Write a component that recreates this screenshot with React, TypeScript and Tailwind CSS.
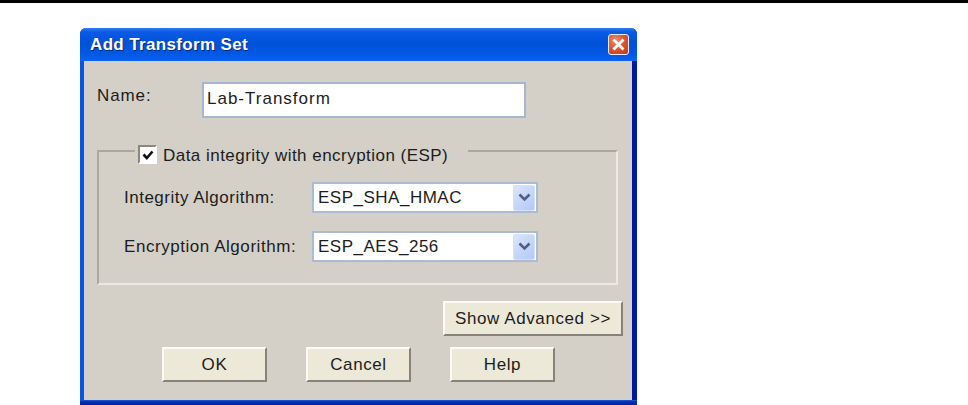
const font = "font-['Liberation_Sans',Arial,sans-serif]";

function CloseButton() {
  return (
    <button
      type="button"
      aria-label="Close"
      className="flex h-[21px] w-[21px] items-center justify-center rounded-[3px] border border-[#e8ecf8] bg-[radial-gradient(circle_at_35%_30%,#ec8a6a,#d9502a_55%,#bf3a14)]"
    >
      <svg width="13" height="13" viewBox="0 0 13 13">
        <path d="M2.5 2.5 L10.5 10.5 M10.5 2.5 L2.5 10.5" stroke="#ffffff" strokeWidth="2.8" strokeLinecap="square" />
      </svg>
    </button>
  );
}

function ComboBox({ value }: { value: string }) {
  return (
    <div className="flex h-[31px] w-[226px] items-center justify-between border-2 border-[#a9bcd3] bg-white pl-[4px] pr-[1px]">
      <span className="text-[17px] leading-none tracking-[0.5px] text-[#1c1c1c]">{value}</span>
      <span className="flex h-[26px] w-[22px] items-center justify-center rounded-[2px] border border-[#d5e0f8] bg-[linear-gradient(135deg,#dbe5fb,#b4c8f5)]">
        <svg width="13" height="9" viewBox="0 0 13 9">
          <path d="M1.5 1.5 L6.5 6.5 L11.5 1.5" fill="none" stroke="#4d6185" strokeWidth="2.6" />
        </svg>
      </span>
    </div>
  );
}

function DialogButton({ label, className }: { label: string; className: string }) {
  return (
    <button
      type="button"
      className={`h-[35px] border-t-2 border-l-2 border-r-2 border-b-2 border-t-[#fbfaf5] border-l-[#fbfaf5] border-r-[#85827a] border-b-[#85827a] bg-[#ece9d8] text-[17px] leading-none tracking-[0.6px] text-[#1c1c1c] ${className}`}
    >
      {label}
    </button>
  );
}

export default function App() {
  return (
    <div className={`h-[405px] w-[968px] overflow-hidden bg-white ${font}`}>
      <div className="h-[3px] bg-black" />

      <div className="ml-[80px] mt-[25px] flex h-[377px] w-[557px] flex-col rounded-t-[6px] bg-[#0a3fd0]">
        <div className="flex h-[33px] shrink-0 items-center justify-between rounded-t-[6px] bg-[linear-gradient(180deg,#2e7cf2_0%,#0a5ae6_12%,#0052d8_45%,#0058e4_80%,#0a62ee_100%)] pl-[10px] pr-[8px]">
          <span className="text-[17px] font-bold leading-none tracking-[0.35px] text-white [text-shadow:1px_1px_0_#0a2a80]">
            Add Transform Set
          </span>
          <CloseButton />
        </div>

        <div className="flex min-h-0 flex-1 border-l-[4px] border-r-[5px] border-l-[#0a54e4] border-r-[#00189c] bg-[#d4d0c8]">
          <div className="w-full pl-[13px] pt-[21px]">
            <div className="flex h-[36px] items-center">
              <label className="mb-[10px] w-[105px] text-[17px] leading-none tracking-[0.9px] text-[#1c1c1c]">Name:</label>
              <div className="flex h-[36px] w-[324px] items-center border-2 border-[#a3b8d0] bg-white pb-[3px] pl-[3px]">
                <span className="text-[17px] leading-none tracking-[1px] text-[#1c1c1c]">Lab-Transform</span>
              </div>
            </div>

            <fieldset className="mt-[20px] h-[147px] w-[521px] border-t-2 border-l-2 border-r-2 border-b-2 border-t-[#aaa79f] border-l-[#aaa79f] border-r-[#ebe9e3] border-b-[#ebe9e3] pl-[25px]">
              <legend className="ml-[11px] flex h-[26px] items-end bg-[#d4d0c8] pl-[3px] pr-[20px]">
                <span className="flex h-[19px] w-[19px] items-center justify-center border-2 border-t-[#8a877e] border-l-[#8a877e] border-r-white border-b-white bg-white">
                  <svg width="12" height="12" viewBox="0 0 12 12">
                    <path d="M1.5 5.5 L4.8 9 L10.5 2.5" fill="none" stroke="#111111" strokeWidth="2.6" />
                  </svg>
                </span>
                <span className="ml-[6px] text-[17px] leading-none tracking-[0.47px] text-[#1c1c1c]">
                  Data integrity with encryption (ESP)
                </span>
              </legend>

              <div className="mt-[18px] flex h-[31px] items-center">
                <span className="w-[188px] text-[17px] leading-none tracking-[0.5px] text-[#1c1c1c]">Integrity Algorithm:</span>
                <ComboBox value="ESP_SHA_HMAC" />
              </div>
              <div className="mt-[18px] flex h-[31px] items-center">
                <span className="w-[188px] text-[17px] leading-none tracking-[0.55px] text-[#1c1c1c]">Encryption Algorithm:</span>
                <ComboBox value="ESP_AES_256" />
              </div>
            </fieldset>

            <div className="mt-[16px] flex w-[526px] justify-end">
              <DialogButton label="Show Advanced >>" className="w-[180px]" />
            </div>

            <div className="ml-[65px] mt-[11px] flex gap-[39px]">
              <DialogButton label="OK" className="w-[105px]" />
              <DialogButton label="Cancel" className="w-[105px]" />
              <DialogButton label="Help" className="w-[105px]" />
            </div>
          </div>
        </div>

        <div className="h-[5px] shrink-0 bg-[linear-gradient(180deg,#1a5ae6_0%,#0a2ea8_35%,#00209c_100%)]" />
      </div>
    </div>
  );
}
